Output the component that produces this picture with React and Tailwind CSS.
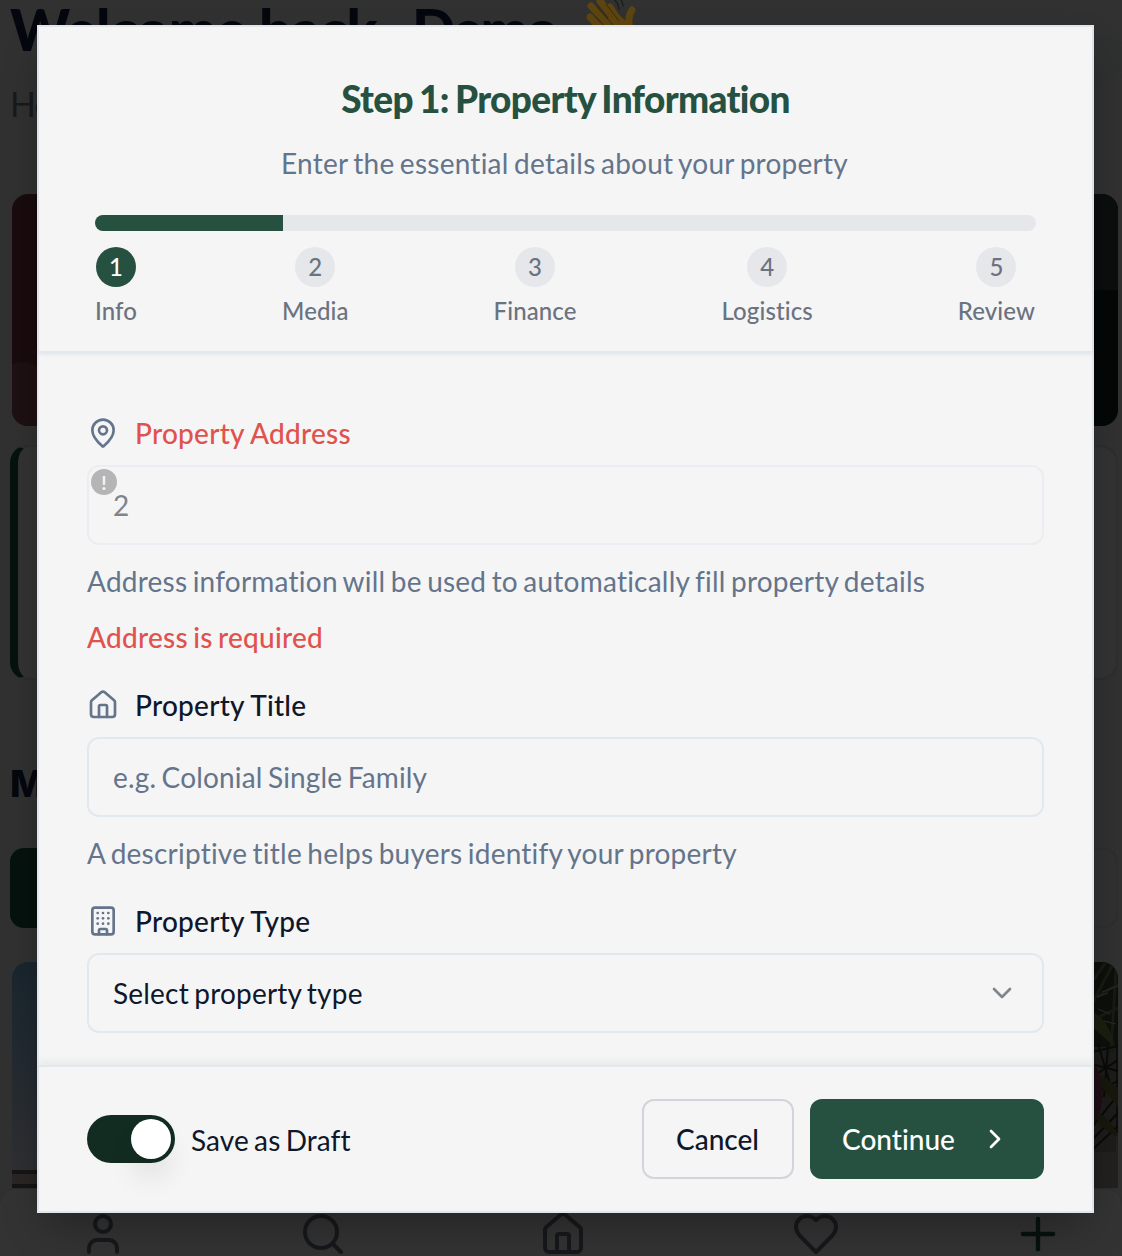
import React from "react";
import { Building, ChevronDown, ChevronRight, House, MapPin, Plus, Search, User } from "lucide-react";

const steps = ["Info", "Media", "Finance", "Logistics", "Review"];

function Heart() {
  return (
    <svg className="size-12" viewBox="0 0 24 24" fill="none" stroke="currentColor" strokeWidth="2" strokeLinecap="round" strokeLinejoin="round">
      <path d="M19 14c1.49-1.46 3-3.21 3-5.5A5.5 5.5 0 0 0 16.5 3c-1.76 0-3 .5-4.5 2-1.5-1.5-2.74-2-4.5-2A5.5 5.5 0 0 0 2 8.5c0 2.3 1.5 4.05 3 5.5l7 7Z" />
    </svg>
  );
}

function Wave() {
  return (
    <svg className="h-[60px] w-[56px]" viewBox="0 0 56 60" fill="none" strokeLinecap="round">
      <g stroke="#5e4510" strokeWidth="7">
        <path d="M7 22L23 39" />
        <path d="M8 11L29 34" />
        <path d="M17 6L35 29" />
        <path d="M27 12L39 31" />
        <path d="M49 15Q44 22 47 35" />
      </g>
      <path d="M15 29L34 18L43 26L47 22L46 43L32 54L19 43Z" fill="#5e4510" />
      <g stroke="#3c2a0b" strokeWidth="1">
        <path d="M12 21L25 35M14 12L30 30M23 9L36 26" />
      </g>
      <g stroke="#1c1e20" strokeWidth="1.5">
        <path d="M29 3Q35 6 36 14M33 0Q39 3 40 11" />
      </g>
    </svg>
  );
}

function Palm() {
  return (
    <svg className="h-[226px] w-[38px]" viewBox="0 0 38 226" fill="none">
      <rect width="38" height="226" fill="#0c0f0a" />
      <path d="M0 192L38 170V226H0Z" fill="#23211f" />
      <path d="M12 85H36V190H12Z" fill="#1d1c1a" />
      <g stroke="#171b13" strokeWidth="3">
        <path d="M12 42L34 0M12 20L26 0M12 38L38 22M12 58L38 46M36 8L31 90" />
      </g>
      <g stroke="#2c2e2e" strokeWidth="1">
        <path d="M22 30L38 24M18 47L30 52M24 59L36 62M17 35L28 31" />
      </g>
      <g stroke="#090b08" strokeWidth="2">
        <path d="M12 90L38 84M12 102L38 109M12 115L38 98M18 82L35 138M12 132L38 119M28 84L24 135M12 165L38 133M12 178L38 151M12 188L38 164" />
      </g>
      <path d="M12 50Q28 55 35 85L12 65Z" fill="#1a1e10" />
      <path d="M12 98Q26 118 21 145Q18 158 12 164Z" fill="#1e0f15" />
      <path d="M20 112L38 126V145L22 126ZM14 150Q30 153 38 175L20 164Z" fill="#18170c" />
    </svg>
  );
}

function Backdrop() {
  return (
    <div className="flex h-full flex-col bg-[#313131]">
      <div className="flex h-[194px] shrink-0 justify-between pl-[10px]">
        <div>
          <div className="flex h-[66px] items-start text-[#05070e]">
            <h1 className="-mt-[4px] w-[573px] whitespace-nowrap font-black text-[57px] leading-[66px] tracking-[-0.6px]">
              Welcome back, <span className="ml-[9px] tracking-[-2.5px]">Demo</span>
            </h1>
            <div className="-mt-[5px]"><Wave /></div>
          </div>
          <p className="mt-[18px] text-[34px] leading-[40px] tracking-[-1px] text-[#17191d]">Here's your portfolio</p>
        </div>
        <div className="mt-[36px] h-[46px] w-[60px] rounded-full bg-[#2e312f] blur-[2px]" />
      </div>
      <div className="mx-[4px] ml-[12px] flex h-[232px] shrink-0 justify-between">
        <div className="h-full w-[400px] overflow-hidden rounded-[16px] bg-[#190b0e]">
          <div className="mt-[168px] h-[200px] w-[100px] -translate-x-[40px] rounded-[50%] bg-[#1e1013]" />
        </div>
        <div className="h-full w-[400px] overflow-hidden rounded-[16px] bg-[#030706]">
          <div className="h-[96px] bg-[#0a0e0d]" />
        </div>
      </div>
      <div className="mx-[4px] ml-[10px] mt-[19px] h-[235px] shrink-0 rounded-[18px] border-2 border-l-8 border-[#2e2e2e] border-l-[#06120e] bg-[#333333]" />
      <h2 className="ml-[10px] mt-[79px] h-[50px] shrink-0 font-['Inter',sans-serif] text-[37px] font-extrabold leading-[50px] text-[#05070e]">My</h2>
      <div className="mx-[4px] ml-[10px] mt-[39px] flex h-[80px] shrink-0 justify-between">
        <div className="w-[300px] rounded-[14px] bg-[#06120e]" />
        <div className="w-[300px] rounded-[14px] border-2 border-[#2e2e2e]" />
      </div>
      <div className="ml-[12px] mr-[4px] mt-[34px] flex h-[226px] shrink-0 justify-between">
        <div className="flex w-[300px] flex-col overflow-hidden rounded-t-[16px] bg-linear-to-b from-[#19262f] to-[#303033]">
          <div className="mt-auto h-[18px] border-y-4 border-[#171513] bg-[#292624]" />
        </div>
        <div className="overflow-hidden rounded-t-[16px]"><Palm /></div>
      </div>
      <nav className="h-[68px] shrink-0 rounded-t-[16px] border-t border-[#2d2d2d] bg-[#333333] text-[#16181b]">
        <div className="ml-[79px] mt-[21px] flex h-12 w-[985px] items-center">
          <User className="size-12" />
          <Search className="ml-[172px] size-12" />
          <House className="ml-[192px] size-12" />
          <div className="ml-[205px]"><Heart /></div>
          <Plus className="ml-[172px] size-[52px] text-[#06120e]" />
        </div>
      </nav>
    </div>
  );
}

function Label({ icon: Icon, children, error }) {
  return (
    <div className="flex h-8 items-center gap-4 tracking-[0.25px] [word-spacing:-0.5px]">
      <Icon className="size-8 text-[#64748b]" />
      <span className={error ? "font-medium text-[#e0524d]" : "font-medium text-[#0f172a]"}>{children}</span>
    </div>
  );
}

export default function App() {
  return (
    <div className="relative h-[1256px] w-[1122px] overflow-hidden font-['Lato',sans-serif] [font-variant-ligatures:none]">
      <Backdrop />
      <div role="dialog" className="absolute left-[37px] top-[25px] flex h-[1188px] w-[1057px] flex-col border-2 border-[#e2e6ed] bg-[#f5f5f5] text-[28px] leading-[40px] shadow-[0_20px_40px_-8px_rgba(0,0,0,0.3)]">
        <header className="h-[326px] shrink-0 border-b-2 border-[#e2e8f0] px-[56px] pt-[48px] shadow-[0_2px_4px_rgba(0,0,0,0.06)]">
          <h2 className="whitespace-nowrap text-center text-[37px] font-black leading-[48px] tracking-[-0.65px] text-[#265141] [word-spacing:-2px]">Step 1: Property Information</h2>
          <p className="mt-[20px] pr-[2px] text-center tracking-[0.25px] text-[#64748b] [word-spacing:-2px]">Enter the essential details about your property</p>
          <div className="mt-8 h-4 overflow-hidden rounded-full bg-[#e5e7eb]">
            <div className="h-full w-1/5 bg-[#265141]" />
          </div>
          <ol className="mt-4 flex justify-between pr-px text-[24px] leading-8 text-[#6b7280]">
            {steps.map((step, i) => (
              <li key={step} className="flex flex-col items-center">
                <span className={i === 0 ? "flex size-10 items-center justify-center rounded-full bg-[#265141] font-medium text-white" : "flex size-10 items-center justify-center rounded-full bg-[#e5e7eb] font-medium"}>{i + 1}</span>
                <span className="mt-2 font-medium tracking-[0.1px]">{step}</span>
              </li>
            ))}
          </ol>
        </header>
        <main className="flex-1 px-12 pt-16">
          <Label icon={MapPin} error>Property Address</Label>
          <div className="relative mt-4 flex h-20 items-center rounded-xl border-2 border-[#ececf2] px-6 text-[#7f858e]">
            2
            <span className="absolute left-[2px] top-[2px] flex size-[26px] items-center justify-center rounded-full bg-[#b5b5b5] text-[19px] font-bold leading-none text-[#f5f5f5]">!</span>
          </div>
          <p className="mt-4 tracking-[0.23px] text-[#64748b] [word-spacing:-2px]">Address information will be used to automatically fill property details</p>
          <p className="mt-4 font-medium tracking-[0.25px] text-[#e0524d] [word-spacing:-2px]">Address is required</p>
          <div className="mt-8"><Label icon={House}>Property Title</Label></div>
          <div className="mt-4 flex h-20 items-center rounded-xl border-2 border-[#e2e8f0] px-6 tracking-[0.17px] text-[#64748b] [word-spacing:-2px]">e.g. Colonial Single Family</div>
          <p className="mt-4 tracking-[0.23px] text-[#64748b] [word-spacing:-2px]">A descriptive title helps buyers identify your property</p>
          <div className="mt-8"><Label icon={Building}>Property Type</Label></div>
          <div className="mt-4 flex h-20 items-center justify-between rounded-xl border-2 border-[#e2e8f0] px-6 text-[#0f172a]">
            <span className="tracking-[0.2px] [word-spacing:-2px]">Select property type</span>
            <ChevronDown className="size-8 text-[#81868e]" />
          </div>
        </main>
        <footer className="flex h-[146px] shrink-0 items-center border-t-2 border-[#e2e8f0] px-12 shadow-[0_-4px_8px_rgba(0,0,0,0.05)]">
          <div className="flex h-12 w-[88px] items-center justify-end rounded-full bg-[#132c22] pr-1">
            <div className="size-10 rounded-full bg-white shadow-[0_20px_30px_-4px_rgba(0,0,0,0.12)]" />
          </div>
          <span className="ml-4 pt-[2px] tracking-[0.1px] text-[#0f172a] [word-spacing:-2px]">Save as Draft</span>
          <button className="ml-auto h-20 w-[152px] rounded-xl border-2 border-[#d1d5db] pr-[1px] font-medium text-[#0f172a]">Cancel</button>
          <button className="ml-4 flex h-20 w-[234px] items-center rounded-xl bg-[#265141] pl-8 font-medium text-white">
            Continue
            <ChevronRight className="ml-6 size-8" />
          </button>
        </footer>
      </div>
    </div>
  );
}
